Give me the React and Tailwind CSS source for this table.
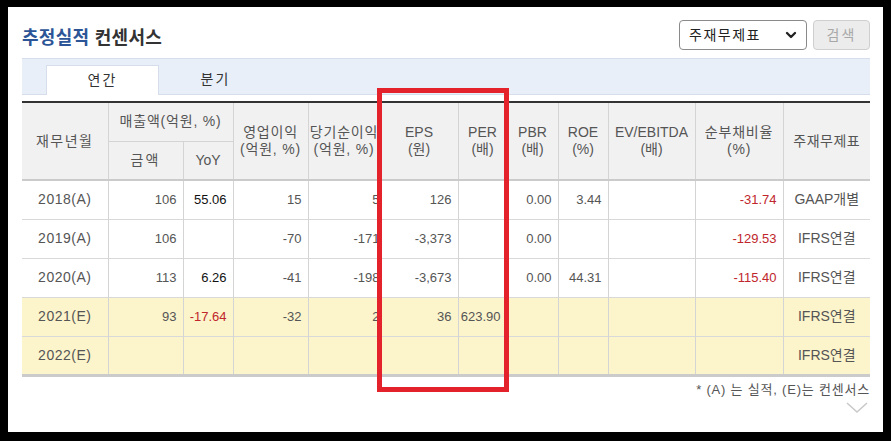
import { ChevronDown } from "lucide-react";

const cols = [86, 75, 50, 75, 72, 78, 49, 51, 50, 87, 88, 87];

const rows = [
  { year: "2018(A)", amt: "106", yoy: "55.06", op: "15", net: "5", eps: "126", per: "", pbr: "0.00", roe: "3.44", ev: "", debt: "-31.74", type: "GAAP개별" },
  { year: "2019(A)", amt: "106", yoy: "", op: "-70", net: "-171", eps: "-3,373", per: "", pbr: "0.00", roe: "", ev: "", debt: "-129.53", type: "IFRS연결" },
  { year: "2020(A)", amt: "113", yoy: "6.26", op: "-41", net: "-198", eps: "-3,673", per: "", pbr: "0.00", roe: "44.31", ev: "", debt: "-115.40", type: "IFRS연결" },
  { year: "2021(E)", amt: "93", yoy: "-17.64", op: "-32", net: "2", eps: "36", per: "623.90", pbr: "", roe: "", ev: "", debt: "", type: "IFRS연결", est: true },
  { year: "2022(E)", amt: "", yoy: "", op: "", net: "", eps: "", per: "", pbr: "", roe: "", ev: "", debt: "", type: "IFRS연결", est: true },
];

const isNeg = (v) => v.startsWith("-");

function Num({ value, red, dark, tight }) {
  return (
    <td
      className={`border-x border-[#d4d4d4] ${tight ? "pr-0" : "pr-[6px]"} text-right whitespace-nowrap ${
        red && isNeg(value) ? "text-[#c0262c]" : dark ? "text-[#111]" : "text-[#555]"
      }`}
    >
      {value}
    </td>
  );
}

export default function App() {
  return (
    <div
      className="w-[891px] h-[441px] bg-black pt-[7px] pl-[8px] pr-[8px] pb-[9px]"
      style={{ fontFamily: '"Liberation Sans", "Noto Sans CJK KR", sans-serif' }}
    >
      <div className="relative h-full bg-white pl-[14px] pr-[13px] pt-[13px]">
        <div className="flex items-center justify-between h-[30px]">
          <h2 className="mt-[6px] text-[18px] font-bold tracking-[0.3px] text-[#333]">
            <span className="text-[#2c5597]">추정실적</span> 컨센서스
          </h2>
          <div className="flex items-center gap-[6px]">
            <div className="flex items-center justify-between w-[128px] h-[30px] rounded-[4px] border border-[#8a8a8a] pl-[9px] pr-[7px] text-[14px] tracking-[1.5px] text-[#222]">
              <span>주재무제표</span>
              <ChevronDown className="h-4 w-4" strokeWidth={3.5} />
            </div>
            <button
              type="button"
              className="w-[57px] h-[30px] rounded-[4px] border border-[#cfcfcf] bg-[#ececec] text-[14px] tracking-[2px] text-[#a8a8a8]"
            >
              검색
            </button>
          </div>
        </div>

        <div className="mt-[8px] h-[37px] border-y border-[#d5deea] bg-[#e9eff8] pl-[24px] flex items-end">
          <div className="w-[113px] h-[30px] bg-white border-x border-t border-[#d5deea] flex items-center justify-center text-[14px] tracking-[2px] text-[#333] -mb-px">
            연간
          </div>
          <div className="w-[113px] h-[30px] flex items-center justify-center text-[14px] tracking-[2px] text-[#333]">
            분기
          </div>
        </div>

        <table className="mt-[6px] w-[848px] table-fixed border-collapse text-[13px] border-t-[2px] border-t-[#333]">
          <colgroup>
            {cols.map((w, i) => (
              <col key={i} style={{ width: w }} />
            ))}
          </colgroup>
          <thead className="bg-[#f1f1f1] text-[#555] text-[14px] tracking-[0.8px]">
            <tr className="h-[39px]">
              <th rowSpan={2} className="font-normal border-r border-[#d4d4d4] tracking-[1.5px]">재무년월</th>
              <th colSpan={2} className="font-normal border-x border-b border-[#d4d4d4] whitespace-nowrap">
                매출액(억원, %)
              </th>
              <th rowSpan={2} className="font-normal border-x border-[#d4d4d4] leading-[17px] whitespace-nowrap">
                영업이익<br />(억원, %)
              </th>
              <th rowSpan={2} className="font-normal border-x border-[#d4d4d4] leading-[17px] whitespace-nowrap">
                당기순이익<br />(억원, %)
              </th>
              <th rowSpan={2} className="font-normal border-x border-[#d4d4d4] leading-[17px] tracking-normal">EPS<br />(원)</th>
              <th rowSpan={2} className="font-normal border-x border-[#d4d4d4] leading-[17px] tracking-normal">PER<br />(배)</th>
              <th rowSpan={2} className="font-normal border-x border-[#d4d4d4] leading-[17px] tracking-normal">PBR<br />(배)</th>
              <th rowSpan={2} className="font-normal border-x border-[#d4d4d4] leading-[17px] tracking-normal">ROE<br />(%)</th>
              <th rowSpan={2} className="font-normal border-x border-[#d4d4d4] leading-[17px] tracking-normal">EV/EBITDA<br />(배)</th>
              <th rowSpan={2} className="font-normal border-x border-[#d4d4d4] leading-[17px]">순부채비율<br />(%)</th>
              <th rowSpan={2} className="font-normal border-l border-[#d4d4d4] tracking-[0.5px]">주재무제표</th>
            </tr>
            <tr className="h-[39px]">
              <th className="font-normal border-r border-[#d4d4d4] tracking-[2px]">금액</th>
              <th className="font-normal border-x border-[#d4d4d4] tracking-normal">YoY</th>
            </tr>
          </thead>
          <tbody className="border-t-[2px] border-t-[#cbcbcb] border-b-[3px] border-b-[#cbcbcb]">
            {rows.map((r) => (
              <tr
                key={r.year}
                className={`h-[39px] border-b border-[#d9d9d9] ${r.est ? "bg-[#fcf4cb]" : "bg-white"}`}
              >
                <td className="border-r border-[#d4d4d4] text-center text-[#555] text-[14px] tracking-[0.5px]">{r.year}</td>
                <Num value={r.amt} />
                <Num value={r.yoy} red dark />
                <Num value={r.op} />
                <Num value={r.net} tight />
                <Num value={r.eps} />
                <Num value={r.per} />
                <Num value={r.pbr} />
                <Num value={r.roe} />
                <Num value={r.ev} />
                <Num value={r.debt} red />
                <td className="border-l border-[#d4d4d4] text-center text-[#555] whitespace-nowrap text-[14px]">{r.type}</td>
              </tr>
            ))}
          </tbody>
        </table>

        <p className="mt-[3px] text-right text-[13px] tracking-[0.8px] text-[#555]">* (A) 는 실적, (E)는 컨센서스</p>
        <div className="mt-[3px] flex justify-end pr-[2px]">
          <svg width="22" height="12" viewBox="0 0 22 12" fill="none">
            <path d="M1 1 L11 10 L21 1" stroke="#c9c9c9" strokeWidth="1.6" />
          </svg>
        </div>

        <div className="absolute left-[369px] top-[81px] w-[132px] h-[304px] border-[5px] border-[#e3222b]" />
      </div>
    </div>
  );
}
